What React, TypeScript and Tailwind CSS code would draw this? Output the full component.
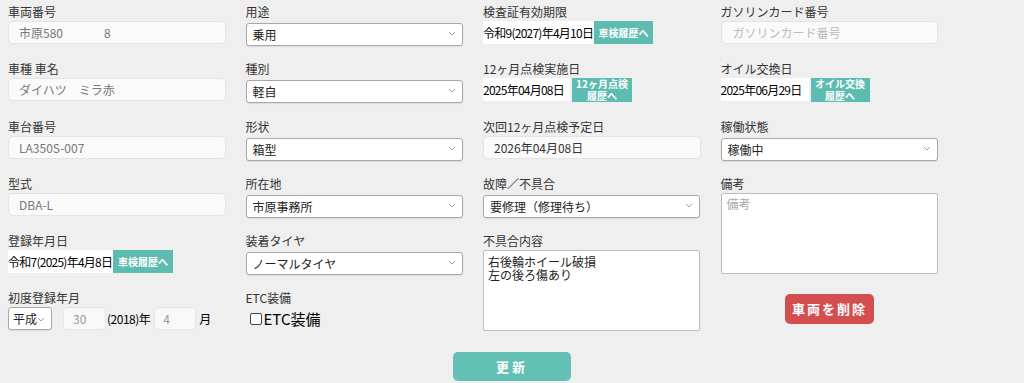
import React from "react";

const Chevron = () => (
  <svg
    className="pointer-events-none absolute right-[7px] top-[10px]"
    width="8"
    height="5"
    viewBox="0 0 8 5"
    fill="none"
  >
    <path d="M1 1l3 3 3-3" stroke="#a0a0a0" strokeWidth="1" />
  </svg>
);

const Field = ({
  label,
  last,
  children,
}: {
  label: string;
  last?: boolean;
  children: React.ReactNode;
}) => (
  <div className={last ? "flex flex-col" : "flex flex-col mb-[16.3px]"}>
    <div className="h-[18px] text-[12px] leading-[18px] text-[#333]">{label}</div>
    {children}
  </div>
);

const RoInput = ({ value, dark }: { value: React.ReactNode; dark?: boolean }) => (
  <div
    className={
      "h-[23px] w-[218px] rounded-[5px] border border-[#e4e4e4] bg-[#fafafa] pl-[10px] text-[12px] leading-[21px] whitespace-pre " +
      (dark ? "text-[#333]" : "text-[#777]")
    }
  >
    {value}
  </div>
);

const Select = ({ value, w = "w-[217px]", pl = "pl-[6px]" }: { value: string; w?: string; pl?: string }) => (
  <div className={"relative h-[23px] " + w}>
    <select
      defaultValue={value}
      className={
        "h-[23px] w-full appearance-none rounded-[3px] border border-[#a8a8a8] bg-white text-[12px] leading-[21px] text-[#222] shadow-[0_1px_1px_rgba(0,0,0,0.08)] outline-none " +
        pl
      }
    >
      <option value={value}>{value}</option>
    </select>
    <Chevron />
  </div>
);

const TealBtn = ({ children, w, two }: { children: React.ReactNode; w: string; two?: boolean }) => (
  <div
    className={
      "flex shrink-0 flex-col items-center justify-center bg-[#5dbcb1] text-center font-bold text-white whitespace-nowrap " +
      w +
      (two ? " h-[24px] text-[10px] leading-[12px]" : " h-[23px] text-[10px] leading-[23px]")
    }
  >
    {children}
  </div>
);

const DateRow = ({
  text,
  boxW,
  btn,
  btnW,
  two,
  gap,
}: {
  text: string;
  boxW: string;
  btn: React.ReactNode;
  btnW: string;
  two?: boolean;
  gap?: string;
}) => (
  <div className="flex h-[23px] items-start">
    <div
      className={
        "h-[23px] shrink-0 overflow-hidden bg-white text-[12px] leading-[23px] tracking-[-0.75px] text-black whitespace-nowrap " +
        boxW
      }
    >
      {text}
    </div>
    <div className={gap ?? ""}>
      <TealBtn w={btnW} two={two}>
        {btn}
      </TealBtn>
    </div>
  </div>
);

export default function App() {
  return (
    <div className="h-[383px] w-[1024px] overflow-hidden bg-[#efefef] font-['Noto_Sans_CJK_JP',sans-serif] text-[#333]">
      <div className="flex items-start gap-x-[19.5px] pl-[8px] pt-[3px]">
        {/* Column 1 */}
        <div className="flex w-[218px] flex-col">
          <Field label="車両番号">
            <RoInput
              value={
                <>
                  市原580<span className="ml-[41px]">8</span>
                </>
              }
            />
          </Field>
          <Field label="車種 車名">
            <RoInput value="ダイハツ　ミラ赤" />
          </Field>
          <Field label="車台番号">
            <RoInput value="LA350S-007" />
          </Field>
          <Field label="型式">
            <RoInput value="DBA-L" />
          </Field>
          <Field label="登録年月日">
            <DateRow text="令和7(2025)年4月8日" boxW="w-[105px]" btn="車検履歴へ" btnW="w-[60px]" />
          </Field>
          <Field label="初度登録年月" last>
            <div className="flex h-[23px] items-center text-[12px]">
              <Select value="平成" w="w-[44px]" pl="pl-[4px]" />
              <div className="ml-[11px] h-[23px] w-[43px] rounded-[4px] border border-[#e6e6e6] bg-[#f8f8f8] pl-[9px] leading-[21px] text-[#999]">
                30
              </div>
              <span className="ml-[1px] tracking-[-0.5px] text-black">(2018)年</span>
              <div className="ml-[4px] h-[23px] w-[42px] rounded-[4px] border border-[#e6e6e6] bg-[#f8f8f8] pl-[8px] leading-[21px] text-[#999]">
                4
              </div>
              <span className="ml-[3px] text-black">月</span>
            </div>
          </Field>
        </div>

        {/* Column 2 */}
        <div className="flex w-[218px] flex-col">
          <Field label="用途">
            <Select value="乗用" />
          </Field>
          <Field label="種別">
            <Select value="軽自" />
          </Field>
          <Field label="形状">
            <Select value="箱型" />
          </Field>
          <Field label="所在地">
            <Select value="市原事務所" />
          </Field>
          <Field label="装着タイヤ">
            <Select value="ノーマルタイヤ" />
          </Field>
          <Field label="ETC装備" last>
            <label className="flex h-[23px] items-center pl-[4px]">
              <span className="h-[12px] w-[12px] rounded-[2px] border border-[#444] bg-white" />
              <span className="ml-[2px] text-[15px] leading-[18px] text-black">ETC装備</span>
            </label>
          </Field>
        </div>

        {/* Column 3 */}
        <div className="flex w-[218px] flex-col">
          <Field label="検査証有効期限">
            <DateRow text="令和9(2027)年4月10日" boxW="w-[111px]" btn="車検履歴へ" btnW="w-[59px]" />
          </Field>
          <Field label="12ヶ月点検実施日">
            <DateRow
              text="2025年04月08日"
              boxW="w-[87px]"
              gap="ml-[2px]"
              two
              btnW="w-[60px]"
              btn={
                <>
                  <span>12ヶ月点検</span>
                  <span>履歴へ</span>
                </>
              }
            />
          </Field>
          <Field label="次回12ヶ月点検予定日">
            <RoInput value="2026年04月08日" dark />
          </Field>
          <Field label="故障／不具合">
            <Select value="要修理（修理待ち）" />
          </Field>
          <Field label="不具合内容" last>
            <textarea
              defaultValue={"右後輪ホイール破損\n左の後ろ傷あり"}
              className="h-[81px] w-[217px] resize-none rounded-[2px] border border-[#bdbdbd] bg-white px-[4px] pt-[4px] text-[12px] leading-[13px] text-[#222] outline-none"
            />
          </Field>
        </div>

        {/* Column 4 */}
        <div className="flex w-[218px] flex-col">
          <Field label="ガソリンカード番号">
            <div className="h-[23px] w-[217px] rounded-[5px] border border-[#e4e4e4] bg-[#fafafa] pl-[11px] text-[12px] leading-[21px] text-[#bbb]">
              ガソリンカード番号
            </div>
          </Field>
          <Field label="オイル交換日">
            <DateRow
              text="2025年06月29日"
              boxW="w-[88px]"
              gap="ml-[2px]"
              two
              btnW="w-[59px]"
              btn={
                <>
                  <span>オイル交換</span>
                  <span>履歴へ</span>
                </>
              }
            />
          </Field>
          <Field label="稼働状態">
            <Select value="稼働中" />
          </Field>
          <Field label="備考" last>
            <textarea
              placeholder="備考"
              className="h-[81px] w-[217px] resize-none rounded-[2px] border border-[#bdbdbd] bg-white px-[5px] pt-[3px] text-[12px] leading-[14px] text-[#222] outline-none placeholder:text-[#aaa]"
            />
          </Field>
          <div className="mt-[20px] flex justify-center">
            <button className="h-[30px] w-[89px] rounded-[5px] bg-[#d34e4e] text-[13px] font-bold tracking-[2px] text-white">
              車両を削除
            </button>
          </div>
        </div>
      </div>

      <div className="mt-[21px] flex justify-center">
        <button className="h-[29px] w-[118px] rounded-[5px] bg-[#62c0b5] text-[13px] font-bold tracking-[3px] text-white">
          更新
        </button>
      </div>
    </div>
  );
}
